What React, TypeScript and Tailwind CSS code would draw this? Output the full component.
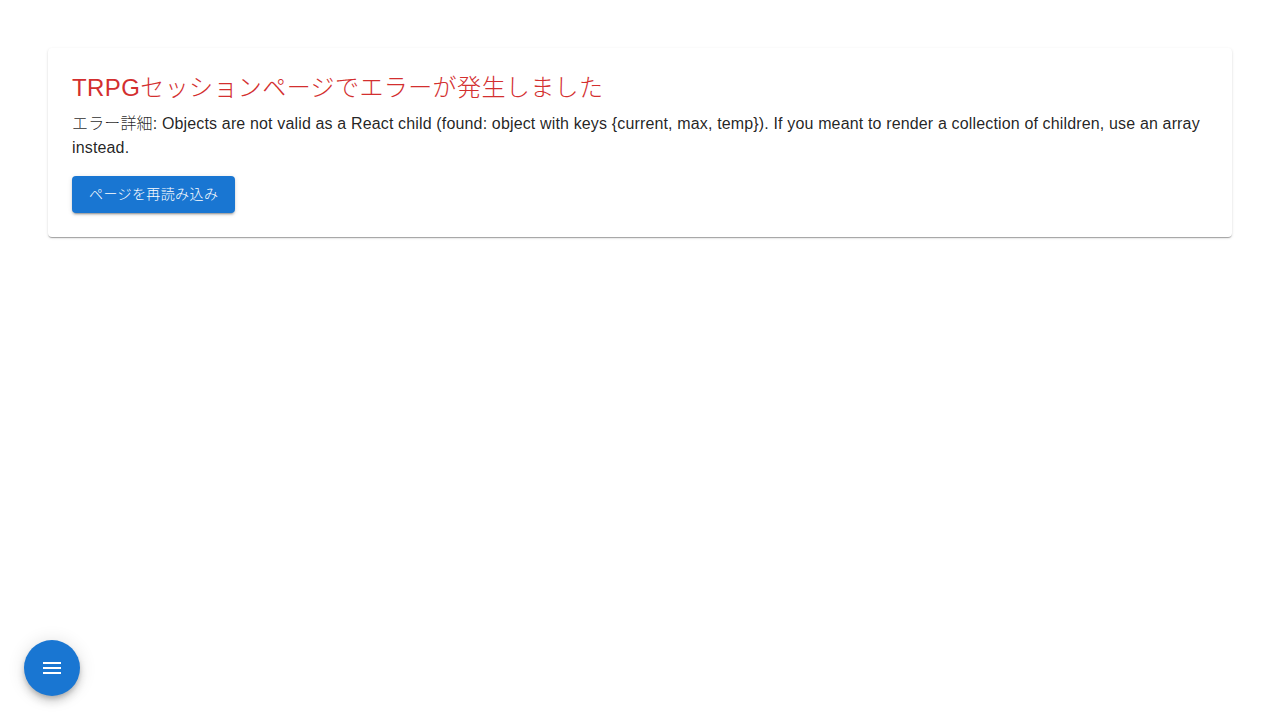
export default function App() {
  return (
    <div className="min-h-screen bg-white">
      <div className="p-12 font-['Liberation_Sans','Noto_Sans_CJK_JP',sans-serif]">
        <div className="rounded bg-white p-6 shadow-[0_2px_1px_-1px_rgba(0,0,0,0.2),0_1px_1px_0_rgba(0,0,0,0.14),0_1px_3px_0_rgba(0,0,0,0.12)]">
          <h5 className="mb-[8.4px] text-[24px] leading-[1.334] font-light tracking-[0.4px] text-[#d32f2f]">
            TRPGセッションページでエラーが発生しました
          </h5>
          <p className="text-[16px] leading-[1.5] font-light tracking-[0.00938em] text-[rgba(0,0,0,0.87)]">
            エラー詳細: Objects are not valid as a React child (found: object with keys {"{current, max, temp}"}). If you meant to render a collection of children, use an array instead.
          </p>
          <button className="mt-4 h-[36.5px] rounded bg-[#1976d2] px-[17px] text-[14px] leading-[1.75] font-light tracking-[0.02857em] text-white shadow-[0_3px_1px_-2px_rgba(0,0,0,0.2),0_2px_2px_0_rgba(0,0,0,0.14),0_1px_5px_0_rgba(0,0,0,0.12)]">
            ページを再読み込み
          </button>
        </div>
      </div>
      <button className="fixed bottom-6 left-6 flex h-14 w-14 items-center justify-center rounded-full bg-[#1976d2] text-white shadow-[0_3px_5px_-1px_rgba(0,0,0,0.2),0_6px_10px_0_rgba(0,0,0,0.14),0_1px_18px_0_rgba(0,0,0,0.12)]">
        <svg viewBox="0 0 24 24" className="h-6 w-6" fill="currentColor">
          <path d="M3 18h18v-2H3zm0-5h18v-2H3zm0-7v2h18V6z" />
        </svg>
      </button>
    </div>
  );
}
